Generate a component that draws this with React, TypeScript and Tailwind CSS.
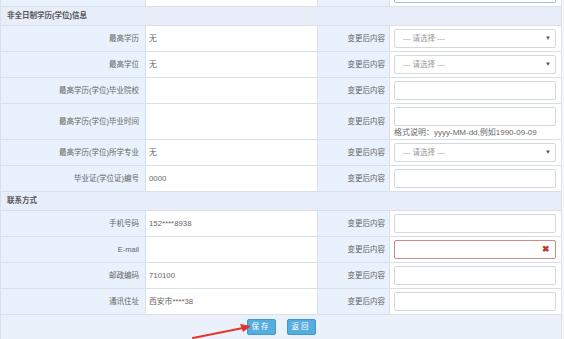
import React from 'react';

const font = { fontFamily: '"Liberation Sans", "Noto Sans CJK SC", sans-serif' };

type Kind = 'select' | 'input' | 'error' | 'date';

interface Row {
  label: string;
  value: string;
  kind: Kind;
}

const eduRows: Row[] = [
  { label: '最高学历', value: '无', kind: 'select' },
  { label: '最高学位', value: '无', kind: 'select' },
  { label: '最高学历(学位)毕业院校', value: '', kind: 'input' },
  { label: '最高学历(学位)毕业时间', value: '', kind: 'date' },
  { label: '最高学历(学位)所学专业', value: '无', kind: 'select' },
  { label: '毕业证(学位证)编号', value: '0000', kind: 'input' },
];

const contactRows: Row[] = [
  { label: '手机号码', value: '152****8938', kind: 'input' },
  { label: 'E-mail', value: '', kind: 'error' },
  { label: '邮政编码', value: '710100', kind: 'input' },
  { label: '通讯住址', value: '西安市****38', kind: 'input' },
];

function Field({ kind }: { kind: Kind }) {
  if (kind === 'select') {
    return (
      <div className="flex h-[19px] w-full items-center justify-between rounded-[2px] border border-[#d4d9df] bg-white pl-2 pr-1 text-[#9a9a9a]">
        <span>--- 请选择 ---</span>
        <span className="text-[6px] text-[#555]">▼</span>
      </div>
    );
  }
  if (kind === 'error') {
    return (
      <div className="flex h-[19px] w-full items-center justify-end rounded-[2px] border border-[#c98a8a] bg-white pr-[5px]">
        <span className="text-[9px] font-bold leading-none text-[#c0392b]">✖</span>
      </div>
    );
  }
  if (kind === 'date') {
    return (
      <div className="flex w-full flex-col gap-[3px]">
        <div className="h-[19px] w-full rounded-[2px] border border-[#d4d9df] bg-white" />
        <span className="text-[8px] leading-none text-[#666]">格式说明：yyyy-MM-dd,例如1990-09-09</span>
      </div>
    );
  }
  return <div className="h-[19px] w-full rounded-[2px] border border-[#d4d9df] bg-white" />;
}

function DataRow({ row }: { row: Row }) {
  const tall = row.kind === 'date';
  return (
    <div
      className={`grid grid-cols-[145px_172px_72px_1fr] border-b border-[#d9e0e8] ${tall ? 'h-[36px]' : 'h-[26px]'}`}
    >
      <div className="flex items-center justify-end border-r border-[#d9e0e8] bg-[#e8f1fc] pr-[6px] text-[#666]">
        {row.label}
      </div>
      <div className="flex items-center border-r border-[#d9e0e8] bg-white pl-[3px] text-[7.8px] text-[#666]">
        {row.value}
      </div>
      <div className="flex items-center justify-end border-r border-[#d9e0e8] bg-[#e8f1fc] pr-[4px] text-[#666]">
        变更后内容
      </div>
      <div className={`flex bg-white pl-[4px] pr-[5px] ${tall ? 'items-start pt-[3px]' : 'items-center'}`}>
        <Field kind={row.kind} />
      </div>
    </div>
  );
}

function Header({ title }: { title: string }) {
  return (
    <div className="flex h-[19px] items-center border-b border-[#d9e0e8] bg-[#e7eef9] pl-[6px] font-bold text-[#555]">
      {title}
    </div>
  );
}

export default function App() {
  return (
    <div className="relative h-[339px] w-[564px] overflow-hidden bg-[#f4f7fb] text-[7.5px]" style={font}>
      <div className="mr-[2px] border-l border-r border-[#d9e0e8]">
        {/* tail of the previous row */}
        <div className="grid h-[7px] grid-cols-[145px_172px_72px_1fr] border-b border-[#d9e0e8]">
          <div className="border-r border-[#d9e0e8] bg-[#e8f1fc]" />
          <div className="border-r border-[#d9e0e8] bg-white" />
          <div className="border-r border-[#d9e0e8] bg-[#e8f1fc]" />
          <div className="bg-white pl-[4px] pr-[5px]">
            <div className="h-[3px] rounded-b-[2px] border-b border-l border-r border-[#9fbfd6]" />
          </div>
        </div>

        <Header title="非全日制学历(学位)信息" />
        {eduRows.map((r) => (
          <DataRow key={r.label} row={r} />
        ))}

        <Header title="联系方式" />
        {contactRows.map((r) => (
          <DataRow key={r.label} row={r} />
        ))}

        <div className="flex h-[25px] items-center justify-center gap-[11px] border-b border-[#d9e0e8] bg-[#eaf1fa]">
          <button className="h-[16px] w-[29px] rounded-[2px] border border-[#3f99cc] bg-[#55addd] text-[7.5px] tracking-[2px] text-white">
            保存
          </button>
          <button className="h-[16px] w-[29px] rounded-[2px] border border-[#3f99cc] bg-[#55addd] text-[7.5px] tracking-[2px] text-white">
            返回
          </button>
        </div>
      </div>

      {/* annotation arrow */}
      <svg className="pointer-events-none absolute left-0 top-0" width="564" height="339">
        <line x1="193" y1="338" x2="243" y2="328" stroke="#e2352b" strokeWidth="2" strokeLinecap="round" />
        <polygon points="251,326 240,324 243,332" fill="#e2352b" />
      </svg>
    </div>
  );
}
